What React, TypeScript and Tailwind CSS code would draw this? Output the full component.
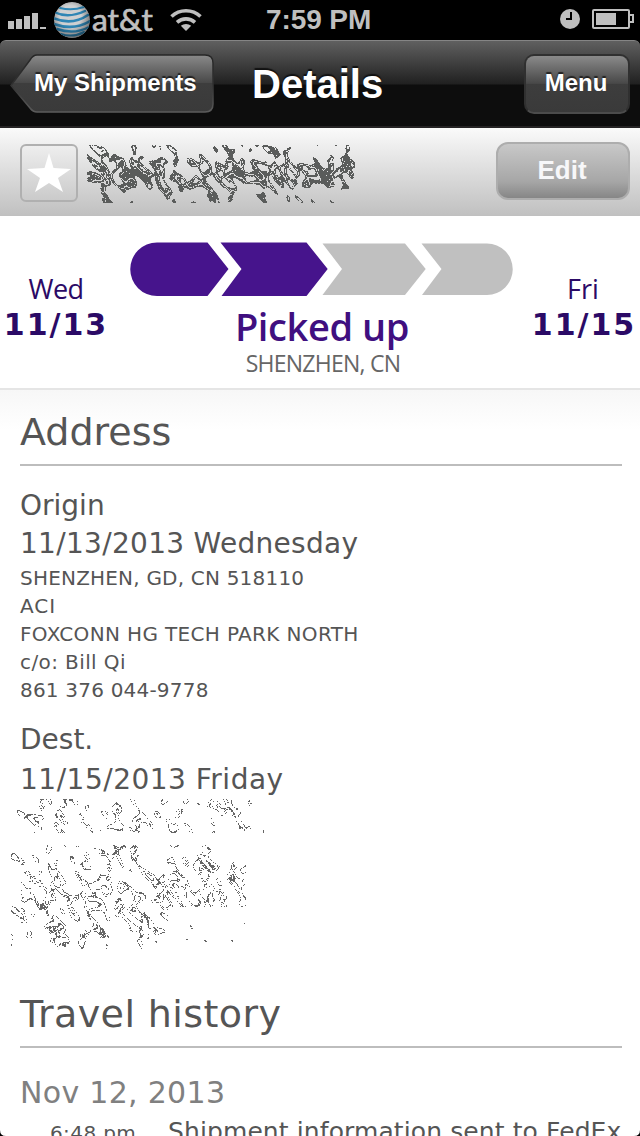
import React from 'react';

const ORIGIN_LINES = [
  { text: 'SHENZHEN, GD, CN 518110', tracking: 'tracking-[0.2px]' },
  { text: 'ACI', tracking: 'tracking-[1px]' },
  { text: 'FOXCONN HG TECH PARK NORTH', tracking: 'tracking-[0.35px]' },
  { text: 'c/o: Bill Qi', tracking: 'tracking-[0.4px]' },
  { text: '861 376 044-9778', tracking: 'tracking-[0.2px]' },
];

type ScribbleProps = {
  width: number;
  height: number;
  seed: number;
  color: string;
  // half thickness of the ink lines, in field units
  band: number;
  // share of speckled pixels left out
  gaps: number;
  // how much ink there is at a point, 0..1
  density: (x: number, y: number) => number;
  className?: string;
};

const hash = (x: number, y: number, seed: number) => {
  const n = Math.sin(x * 127.1 + y * 311.7 + seed * 74.7) * 43758.5453;
  return n - Math.floor(n);
};

const noise = (x: number, y: number, seed: number) => {
  const ix = Math.floor(x);
  const iy = Math.floor(y);
  const fx = x - ix;
  const fy = y - iy;
  const sx = fx * fx * (3 - 2 * fx);
  const sy = fy * fy * (3 - 2 * fy);
  const top = hash(ix, iy, seed) * (1 - sx) + hash(ix + 1, iy, seed) * sx;
  const bottom = hash(ix, iy + 1, seed) * (1 - sx) + hash(ix + 1, iy + 1, seed) * sx;
  return top * (1 - sy) + bottom * sy;
};

// Scrambled ink over private details: contour lines of a slanted noise field
function Scribble({ width, height, seed, color, band, gaps, density, className }: ScribbleProps) {
  let d = '';
  for (let y = 0; y < height; y++) {
    for (let x = 0; x < width; x++) {
      const along = x * 0.5 + y * 0.86;
      const across = x * 0.86 - y * 0.5;
      const bend = noise(x / 16, y / 16, seed + 5) * 1.3;
      const field = noise(along / 9 + bend, across / 5 + bend, seed);
      const inside = field - (1 - density(x, y) * 0.6);
      const line = Math.abs(inside) < band;
      const inner = Math.abs(inside - 0.22) < band * 0.9;
      if ((line || inner) && hash(x, y, seed + 9) > gaps) d += `M${x} ${y}h1v1h-1z`;
    }
  }
  return (
    <svg width={width} height={height} viewBox={`0 0 ${width} ${height}`} className={className}>
      <path d={d} fill={color} />
    </svg>
  );
}

const trackingDensity = (x: number, y: number) => {
  const middle = Math.exp(-(((y - 29) / 15) ** 4));
  const side = x < 14 || x > 246 ? 0.4 : 0;
  return 0.26 + middle * 0.72 - side * middle;
};

const nameDensity = (x: number, y: number) => (x > 238 ? 0.18 : 0.35 + 0.3 * Math.exp(-(((y - 15) / 9) ** 2)));

const streetDensity = (x: number, y: number) => {
  const edge = y < 62 ? 234 : 156;
  if (x > edge) return 0.05;
  if (y < 10 || y > 92 || x < 10) return 0.3;
  return 0.5 + 0.3 * Math.exp(-(((y - 50) / 24) ** 2));
};

function StatusBar() {
  return (
    <div className="flex h-10 items-center bg-black text-[#bfbfbf]">
      <svg width="206" height="40" viewBox="0 0 206 40" className="shrink-0" fill="#bfbfbf">
        <path d="M8 21h6v8H8zM16 19h6v10h-6zM24 16h6v13h-6zM32 13h6v16h-6zM40 27h6v2h-6z" />
        <defs>
          <clipPath id="globe">
            <circle cx="72" cy="20" r="18" />
          </clipPath>
          <radialGradient id="globeShade" cx="0.45" cy="0.4" r="0.6">
            <stop offset="0.5" stopColor="#000" stopOpacity="0" />
            <stop offset="1" stopColor="#000" stopOpacity="0.45" />
          </radialGradient>
        </defs>
        <g clipPath="url(#globe)">
          <circle cx="72" cy="20" r="18" fill="#cfd0d1" />
          <g fill="none" stroke="#2f86b5" strokeLinecap="round">
            <path d="M60 8q12 3 24-1" strokeWidth="2" />
            <path d="M54 12q14 7 31-1" strokeWidth="2.4" />
            <path d="M53 18q19 8 35-3" strokeWidth="2.6" />
            <path d="M54 24q20 7 36-3" strokeWidth="2.6" />
            <path d="M57 29q17 6 32-2" strokeWidth="2.4" />
            <path d="M61 34q12 4 23-2" strokeWidth="2" />
          </g>
          <circle cx="72" cy="20" r="18" fill="url(#globeShade)" />
        </g>
        <text
          x="92"
          y="31"
          fontFamily="Lato, sans-serif"
          fontSize="31.500"
          stroke="#bfbfbf"
          strokeWidth="0.7"
          textLength="61"
          lengthAdjust="spacingAndGlyphs"
        >
          at&amp;t
        </text>
        <g fill="none" stroke="#bfbfbf" strokeWidth="3.6">
          <path d="M171.500 16.500a21 21 0 0 1 29 0" />
          <path d="M177 22.300a13.500 13.500 0 0 1 18 0" />
        </g>
        <path d="M186 31l-5.200-5.200a8 8 0 0 1 10.400 0z" />
      </svg>
      <span className="ml-15 w-[110px] whitespace-nowrap font-['Liberation_Sans'] text-[28px] font-bold leading-10 tracking-[-0.1px]">7:59 PM</span>
      <svg width="80" height="40" viewBox="0 0 80 40" className="ml-auto shrink-0">
        <circle cx="10" cy="19" r="10" fill="#bfbfbf" />
        <path d="M11 12v7H6" fill="none" stroke="#000" strokeWidth="2" />
        <rect x="33" y="10" width="36" height="18" rx="1" fill="none" stroke="#bfbfbf" strokeWidth="2" />
        <path d="M36 13h20v12H36z" fill="#bfbfbf" />
        <path d="M70 15h3v7h-3" fill="none" stroke="#bfbfbf" strokeWidth="2" />
      </svg>
    </div>
  );
}

function NavBar() {
  return (
    <div className="bg-black">
      <div className="flex h-[88px] items-start rounded-t-md border-t border-b-2 border-t-[#858585] border-b-[#252324] bg-[linear-gradient(#606060_0,#202020_43px,#0d0d0d_44px,#0d0d0d_100%)] px-2.5 pt-[13px] font-['Liberation_Sans'] font-bold text-white">
        <button className="relative h-[60px] w-[204px] text-left">
          <svg width="204" height="60" viewBox="0 0 204 60" className="absolute inset-0">
            <defs>
              <linearGradient id="back" x1="0" y1="0" x2="0" y2="1">
                <stop offset="0" stopColor="#8a8a8a" />
                <stop offset="0.49" stopColor="#484848" />
                <stop offset="0.5" stopColor="#3d3d3d" />
                <stop offset="1" stopColor="#3a3a3a" />
              </linearGradient>
              <linearGradient id="backEdge" x1="0" y1="0" x2="0" y2="1">
                <stop offset="0" stopColor="#262626" />
                <stop offset="0.5" stopColor="#303030" />
                <stop offset="1" stopColor="#5c5c5c" />
              </linearGradient>
            </defs>
            <path
              d="M27 1H195Q203 1 203 9V50Q203 58 195 58H27Q23 58 20 54L1 31.500L20 6Q23 1 27 1Z"
              fill="url(#back)"
              stroke="url(#backEdge)"
              strokeWidth="1.500"
            />
          </svg>
          <span className="relative -top-0.5 block whitespace-nowrap pl-6 text-2xl leading-[57px] [text-shadow:0_-2px_1px_#222]">My Shipments</span>
        </button>
        <h1 className="ml-[38px] whitespace-nowrap text-[40px] leading-[60px] [text-shadow:0_-2px_1px_#111]">Details</h1>
        <button className="ml-auto h-[60px] w-[106px] rounded-[10px] border-2 border-[#303030] border-b-[#4c4c4c] bg-[linear-gradient(#8a8a8a,#484848_49%,#3d3d3d_50%,#3a3a3a)] pr-0.5 pb-0.5 text-2xl leading-none [text-shadow:0_-2px_1px_#222]">
          Menu
        </button>
      </div>
    </div>
  );
}

function ShipmentBar() {
  return (
    <div className="flex h-[88px] items-start bg-linear-to-b from-[#fafafa] to-[#c0c0c0] pl-5 pr-2.5">
      <div className="mt-4 flex h-[58px] w-[58px] shrink-0 items-center justify-center rounded-md border-2 border-[#b0b0b0]">
        <svg width="46" height="42" viewBox="0 0 46 42" fill="#fff">
          <path d="M23 1L27.500 16L45 17L32 26L37 40L23 31L9 40L14 26L1 17L18.500 16Z" />
        </svg>
      </div>
      <Scribble width={268} height={58} seed={12} color="#5a5c5b" band={0.085} gaps={0.06} density={trackingDensity} className="mt-[17px] ml-[9px]" />
      <button className="mt-3.5 ml-auto h-[58px] w-[134px] rounded-xl border-2 border-[#adadad] bg-[linear-gradient(#c8c8c8,#a6a6a6_70%,#868686)] pr-0.5 pb-0.5 font-['Liberation_Sans'] text-[26px] font-bold leading-none text-[#f7f7f9]">
        Edit
      </button>
    </div>
  );
}

function Progress() {
  return (
    <div className="flex h-[174px] border-b-2 border-[#e5e5e5] bg-white text-[#2b0a66]">
      <div className="w-[112px] pt-[54px] text-center">
        <div className="font-['Open_Sans'] text-[27px] leading-[38px] tracking-[-0.6px]">Wed</div>
        <div className="whitespace-nowrap font-['DejaVu_Sans'] text-[30px] font-bold leading-[34px] tracking-[2px]">11/13</div>
      </div>
      <div className="ml-[18px] w-[384px] pt-[26px] text-center font-['Open_Sans']">
        <svg width="384" height="56" viewBox="130 242 384 56">
          <g fill="#46148c">
            <path d="M157 242.500H207.500L228.500 269L207.500 296H157A26.700 26.700 0 0 1 157 242.500Z" />
            <path d="M220.500 242.500H306.500L327.700 269L306.500 296H221.500L241.500 269Z" />
          </g>
          <g fill="#c0c0c0">
            <path d="M322.500 243.500H405L425.700 269L405 295H322.500L342 269Z" />
            <path d="M421.500 243.500H487A25.700 25.700 0 0 1 487 295H422L441.500 269Z" />
          </g>
        </svg>
        <div className="mt-1.5 text-[38px] font-semibold leading-[44px] tracking-[-0.4px] text-[#400f80]">Picked up</div>
        <div className="pl-0.5 text-[23px] leading-[30px] tracking-[-0.75px] text-[#666]">SHENZHEN, CN</div>
      </div>
      <div className="ml-auto w-[112px] pt-[54px] text-center">
        <div className="pr-0.5 font-['Open_Sans'] text-[27px] leading-[38px]">Fri</div>
        <div className="whitespace-nowrap font-['DejaVu_Sans'] text-[30px] font-bold leading-[34px] tracking-[2px]">11/15</div>
      </div>
    </div>
  );
}

function Address() {
  return (
    <section className="h-[592px] bg-[linear-gradient(#f7f7f7,#fff_40px)] pt-[10px] pl-5 pr-[18px] text-[#555]">
      <h2 className="h-[66px] border-b-2 border-[#bdbdbd] text-[38px] leading-[64px]">Address</h2>
      <div className="pt-[21px] text-[28px]">
        <div className="leading-[38px]">Origin</div>
        <div className="leading-[38px] tracking-[0.3px]">11/13/2013 Wednesday</div>
      </div>
      <div className="mt-px text-xl leading-7">
        {ORIGIN_LINES.map((line) => (
          <div key={line.text} className={line.tracking}>
            {line.text}
          </div>
        ))}
      </div>
      <div className="mt-4 text-[28px] leading-10">
        <div>Dest.</div>
        <div className="tracking-[0.5px]">11/15/2013 Friday</div>
      </div>
      <Scribble width={254} height={34} seed={3} color="#666" band={0.035} gaps={0.25} density={nameDensity} className="-mt-px -ml-[9px]" />
      <Scribble width={240} height={104} seed={21} color="#666" band={0.035} gaps={0.25} density={streetDensity} className="mt-3 -ml-[9px]" />
    </section>
  );
}

function TravelHistory() {
  return (
    <section className="pl-5 pr-[18px] text-[#555]">
      <h2 className="h-[66px] border-b-2 border-[#bdbdbd] text-[38px] leading-[64px] tracking-[0.4px]">Travel history</h2>
      <div className="mt-[25px] text-[30px] leading-10 tracking-[0.3px] text-[#808080]">Nov 12, 2013</div>
      <div className="-mt-px flex items-baseline whitespace-nowrap">
        <span className="w-[118px] pl-[30px] text-[20px] leading-10 tracking-[0.4px]">6:48 pm</span>
        <span className="pl-[30px] text-[25px] leading-10 tracking-[0.1px]">Shipment information sent to FedEx</span>
      </div>
    </section>
  );
}

export default function App() {
  return (
    <div className="relative h-[1136px] w-[640px] overflow-hidden bg-white font-['DejaVu_Sans']">
      <StatusBar />
      <NavBar />
      <ShipmentBar />
      <Progress />
      <Address />
      <TravelHistory />

      {/* Rounded screen corners */}
      <svg width="640" height="6" viewBox="0 0 640 6" className="absolute bottom-0 left-0">
        <path d="M0 0Q0 6 6 6H0ZM640 0Q640 6 634 6H640Z" />
      </svg>
    </div>
  );
}
